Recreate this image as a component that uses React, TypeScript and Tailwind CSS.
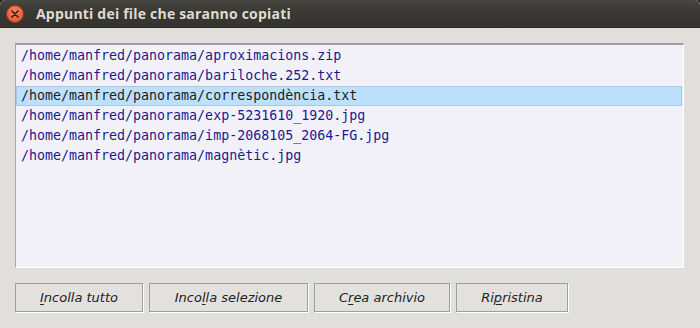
function CloseButton() {
  return (
    <div className="w-[18px] h-[18px] rounded-full bg-[radial-gradient(circle_at_50%_35%,#f8845c,#e1502b)] border border-[#9a3a1d] flex items-center justify-center">
      <svg width="8" height="8" viewBox="0 0 8 8">
        <path d="M1 1 L7 7 M7 1 L1 7" stroke="#3a1a10" strokeWidth="1.6" strokeLinecap="round" />
      </svg>
    </div>
  );
}

function TitleBar() {
  return (
    <div className="h-[28px] shrink-0 flex items-center rounded-t-[5px] bg-[linear-gradient(#47463f,#3a3935_40%,#34332f)] border-b border-[#2a2926] pl-[6px]">
      <CloseButton />
      <span className="ml-[12px] text-[14px] font-bold text-[#dfdbd2] font-['Open_Sans',sans-serif] tracking-[0.2px]">
        Appunti dei file che saranno copiati
      </span>
    </div>
  );
}

const files = [
  "/home/manfred/panorama/aproximacions.zip",
  "/home/manfred/panorama/bariloche.252.txt",
  "/home/manfred/panorama/correspondència.txt",
  "/home/manfred/panorama/exp-5231610_1920.jpg",
  "/home/manfred/panorama/imp-2068105_2064-FG.jpg",
  "/home/manfred/panorama/magnètic.jpg",
];

function FileList() {
  return (
    <div className="h-[225px] bg-[#f3f1f8] border-t-2 border-l border-t-[#9d9ba0] border-l-[#a8a7a8] border-r border-b border-r-white border-b-white pt-[1px]">
      {files.map((f, i) => (
        <div
          key={f}
          className={
            i === 2
              ? "h-[20px] flex items-center pl-[4px] bg-[#bde0fc] border border-[#a6c8e4] text-[#1c1c24] mr-[1px]"
              : "h-[20px] flex items-center pl-[5px] text-[#1a1a90]"
          }
        >
          <span className="font-['DejaVu_Sans_Mono',monospace] text-[13.3px] leading-none whitespace-pre">{f}</span>
        </div>
      ))}
    </div>
  );
}

function Btn({ pre, key1, post, w }: { pre: string; key1: string; post: string; w: string }) {
  return (
    <div className={`${w} h-[29px] flex items-center justify-center border border-[#9e9e9e] shadow-[1px_1px_0_#ffffff] bg-[#e2e1de]`}>
      <span className="italic text-[13px] text-[#222222] font-['DejaVu_Sans',sans-serif] whitespace-pre">
        {pre}
        <span className="underline underline-offset-[2px]">{key1}</span>
        {post}
      </span>
    </div>
  );
}

export default function App() {
  return (
    <div className="w-[700px] h-[328px] bg-[#1d1d1b] overflow-hidden">
      <div className="w-full h-full flex flex-col bg-[#e0dfdc] rounded-t-[5px] overflow-hidden">
        <TitleBar />
        <div className="flex-1 px-[15px] pt-[15px] flex flex-col">
          <div className="pr-[1px]">
            <FileList />
          </div>
          <div className="mt-[15px] flex gap-[6px]">
            <Btn pre="" key1="I" post="ncolla tutto" w="w-[128px]" />
            <Btn pre="Inco" key1="l" post="la selezione" w="w-[159px]" />
            <Btn pre="C" key1="r" post="ea archivio" w="w-[136px]" />
            <Btn pre="Ri" key1="p" post="ristina" w="w-[112px]" />
          </div>
        </div>
      </div>
    </div>
  );
}
